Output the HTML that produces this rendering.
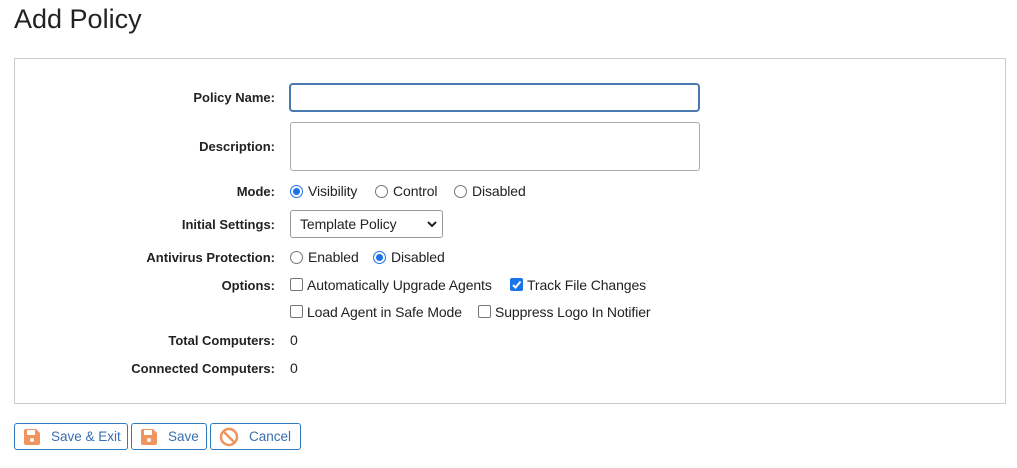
<!DOCTYPE html>
<html><head><style>
body{margin:0;width:1017px;height:468px;background:#fff;font-family:"Liberation Sans",Arial,sans-serif;color:#222;position:relative;overflow:hidden}
.a{position:absolute}
h1{position:absolute;left:14px;top:4px;margin:0;font-weight:300;font-size:27px;color:#222}
.box{left:14px;top:58px;width:990px;height:344px;border:1px solid #ccc}
.lbl{position:absolute;right:742px;font-weight:bold;font-size:13px;text-align:right;white-space:nowrap}
.t{position:absolute;font-size:14px;white-space:nowrap;letter-spacing:-0.1px}
.rad{position:absolute;border:1px solid #777;border-radius:50%;box-sizing:border-box;width:13px;height:13px}
.rad.on{border:1px solid #1a73e8}
.rad.on::after{content:"";position:absolute;left:2px;top:2px;width:7px;height:7px;border-radius:50%;background:#1a73e8}
.cb{position:absolute;width:13px;height:13px;border:1px solid #777;border-radius:2px;box-sizing:border-box}
.cb.on{background:#1a73e8;border-color:#1a73e8}
.btn{position:absolute;top:423px;height:27px;border:1px solid #2e7bbf;border-radius:3px;color:#3a6fb0;font-size:13.5px;box-sizing:border-box}
</style></head><body>
<h1>Add Policy</h1>
<div class="a box"></div>
<div class="lbl" style="top:90px">Policy Name:</div>
<div class="a" style="left:289px;top:83px;width:411px;height:29px;border:2px solid #4a78b0;border-radius:4px;box-sizing:border-box"></div>
<div class="lbl" style="top:139px">Description:</div>
<div class="a" style="left:290px;top:122px;width:410px;height:49px;border:1px solid #aaa;border-radius:3px;box-sizing:border-box"></div>
<div class="lbl" style="top:184px">Mode:</div>
<div class="rad on" style="left:290px;top:185px"></div><div class="t" style="left:308px;top:183px">Visibility</div>
<div class="rad" style="left:375px;top:185px"></div><div class="t" style="left:393px;top:183px">Control</div>
<div class="rad" style="left:454px;top:185px"></div><div class="t" style="left:472px;top:183px">Disabled</div>
<div class="lbl" style="top:217px">Initial Settings:</div>
<div class="a" style="left:290px;top:210px;width:153px;height:28px;border:1px solid #999;border-radius:3px;box-sizing:border-box"></div>
<div class="t" style="left:300px;top:216px">Template Policy</div>
<svg class="a" style="left:426px;top:219px" width="12" height="10"><path d="M2 3l4 4 4-4" stroke="#222" stroke-width="2" fill="none"/></svg>
<div class="lbl" style="top:250px">Antivirus Protection:</div>
<div class="rad" style="left:290px;top:251px"></div><div class="t" style="left:308px;top:249px">Enabled</div>
<div class="rad on" style="left:373px;top:251px"></div><div class="t" style="left:391px;top:249px">Disabled</div>
<div class="lbl" style="top:278px">Options:</div>
<div class="cb" style="left:290px;top:278px"></div><div class="t" style="left:307px;top:277px">Automatically Upgrade Agents</div>
<div class="cb on" style="left:510px;top:278px"><svg width="11" height="11" style="position:absolute;left:0;top:0"><path d="M2 6l2.5 2.5L9.5 2.5" stroke="#fff" stroke-width="2" fill="none"/></svg></div><div class="t" style="left:527px;top:277px">Track File Changes</div>
<div class="cb" style="left:290px;top:305px"></div><div class="t" style="left:307px;top:304px">Load Agent in Safe Mode</div>
<div class="cb" style="left:478px;top:305px"></div><div class="t" style="left:495px;top:304px">Suppress Logo In Notifier</div>
<div class="lbl" style="top:333px">Total Computers:</div><div class="t" style="left:290px;top:332px">0</div>
<div class="lbl" style="top:361px">Connected Computers:</div><div class="t" style="left:290px;top:360px">0</div>

<div class="btn" style="left:14px;width:114px"><svg class="a" style="left:8px;top:4px" width="18" height="18"><path d="M3 1h10l4 4v10a2 2 0 0 1-2 2H3a2 2 0 0 1-2-2V3a2 2 0 0 1 2-2z" fill="#f0955f"/><rect x="4" y="2" width="8" height="5" fill="#fff"/><circle cx="9" cy="12" r="2" fill="#fff"/></svg><span class="a" style="left:36px;top:5px">Save &amp; Exit</span></div>
<div class="btn" style="left:131px;width:76px"><svg class="a" style="left:8px;top:4px" width="18" height="18"><path d="M3 1h10l4 4v10a2 2 0 0 1-2 2H3a2 2 0 0 1-2-2V3a2 2 0 0 1 2-2z" fill="#f0955f"/><rect x="4" y="2" width="8" height="5" fill="#fff"/><circle cx="9" cy="12" r="2" fill="#fff"/></svg><span class="a" style="left:36px;top:5px">Save</span></div>
<div class="btn" style="left:210px;width:91px"><svg class="a" style="left:8px;top:3px" width="20" height="20"><circle cx="10" cy="10" r="8" stroke="#f0955f" stroke-width="2.5" fill="none"/><path d="M4.5 4.5l11 11" stroke="#f0955f" stroke-width="2.5"/></svg><span class="a" style="left:38px;top:5px">Cancel</span></div>
</body></html>
